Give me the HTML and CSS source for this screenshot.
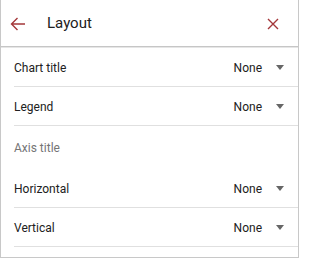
FILE: index.html
```html
<!DOCTYPE html>
<html>
<head>
<meta charset="utf-8">
<link rel="stylesheet" href="styles.css">
</head>
<body>
<div class="panel">
  <div class="header">
    <button class="icon-btn back" aria-label="Back">
      <svg width="16" height="14" viewBox="0 0 16 14"><path d="M15 7H1.5M7.5 1L1.5 7l6 6" fill="none" stroke="#a4373a" stroke-width="1.4"/></svg>
    </button>
    <div class="title">Layout</div>
    <button class="icon-btn close" aria-label="Close">
      <svg width="12" height="12" viewBox="0 0 12 12"><path d="M1 1l10 10M11 1L1 11" fill="none" stroke="#a4373a" stroke-width="1.4"/></svg>
    </button>
  </div>
  <div class="row first"><span class="label">Chart title</span><span class="value">None</span><span class="caret"></span></div>
  <div class="row"><span class="label">Legend</span><span class="value">None</span><span class="caret"></span></div>
  <div class="section">Axis title</div>
  <div class="row"><span class="label">Horizontal</span><span class="value">None</span><span class="caret"></span></div>
  <div class="row"><span class="label">Vertical</span><span class="value">None</span><span class="caret"></span></div>
</div>
</body>
</html>
```
FILE: styles.css
```css
html, body { margin: 0; padding: 0; background: #fff; }
body { font-family: Roboto, "Noto Sans", sans-serif; color: #212121; }
.panel {
  width: 297px;
  height: 257px;
  border: 1px solid #c8c8c8;
  border-top: none;
  box-sizing: content-box;
}
.header {
  height: 46px;
  display: flex;
  align-items: center;
  border-bottom: 1px solid #c6c6c6;
  box-shadow: 0 1px 0 #e6e6e6;
}
.icon-btn {
  background: none;
  border: none;
  padding: 0;
  display: flex;
  align-items: center;
  justify-content: center;
}
.back { width: 16px; height: 14px; margin-left: 9px; margin-top: 1px; }
.title { font-size: 15px; margin-left: 21px; flex: 1; }
.close { width: 12px; height: 12px; margin-right: 19px; margin-top: 1px; }
.row {
  height: 37px;
  display: flex;
  align-items: center;
  margin-left: 13px;
  border-bottom: 1px solid #e0e0e0;
  font-size: 12px;
  padding-top: 1px;
  box-sizing: content-box;
}
.row.first { margin-top: 1px; }
.label { flex: 1; }
.value { margin-right: 14px; }
.caret {
  width: 0; height: 0;
  border-left: 4.5px solid transparent;
  border-right: 4.5px solid transparent;
  border-top: 5px solid #666;
  margin-right: 14px;
}
.section {
  height: 42px;
  display: flex;
  align-items: center;
  padding-left: 13px;
  padding-top: 1px;
  font-size: 12px;
  color: #757575;
}
```
